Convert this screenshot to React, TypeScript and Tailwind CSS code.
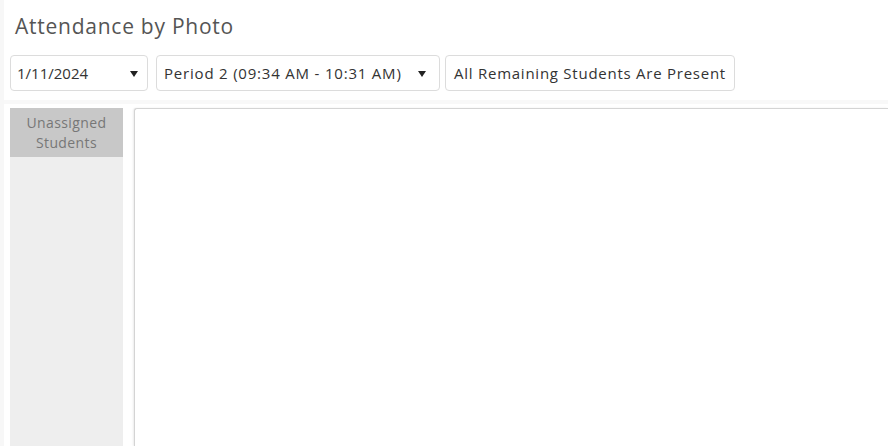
import React from "react";

const Caret = () => (
  <svg width="8" height="6" viewBox="0 0 8 6" className="shrink-0 mt-[2px]">
    <path d="M0 0 L8 0 L4 6 Z" fill="#222" />
  </svg>
);

export default function App() {
  return (
    <div
      className="w-[888px] h-[446px] overflow-hidden bg-white flex"
      style={{ fontFamily: "'Open Sans', 'Noto Sans', sans-serif" }}
    >
      <div className="w-[4px] shrink-0 bg-[#f7f7f7]" />
      <div className="flex-1 flex flex-col">
        <div className="h-[100px] flex flex-col pl-[6px]">
          <h1 className="text-[21px] text-[#555] pl-[5px] pt-[12px] leading-[28px] tracking-[0.75px]">
            Attendance by Photo
          </h1>
          <div className="flex items-center mt-[15px]">
            <div className="w-[138px] h-[36px] border border-[#dcdcdc] rounded-[4px] flex items-center justify-between pl-[6px] pr-[9px] text-[15px] text-[#333]">
              <span>1/11/2024</span>
              <Caret />
            </div>
            <div className="ml-[8px] w-[284px] h-[36px] border border-[#dcdcdc] rounded-[4px] flex items-center justify-between pl-[7px] pr-[13px] text-[15px] text-[#333]">
              <span className="tracking-[0.8px]">Period 2 (09:34 AM - 10:31 AM)</span>
              <Caret />
            </div>
            <div className="ml-[5px] w-[290px] h-[36px] border border-[#dcdcdc] rounded-[4px] flex items-center pl-[8px] text-[15px] text-[#333] tracking-[0.75px]">
              All Remaining Students Are Present
            </div>
          </div>
        </div>
        <div className="h-[4px] bg-[#f8f8f8]" />
        <div className="flex-1 flex pt-[4px] pl-[6px]">
          <div className="w-[113px] flex flex-col bg-[#eeeeee]">
            <div className="h-[49px] bg-[#c8c8c8] text-[#777] text-[14px] leading-[20px] tracking-[0.4px] flex flex-col items-center justify-center">
              <span>Unassigned</span>
              <span>Students</span>
            </div>
          </div>
          <div className="ml-[11px] flex-1 border-t border-l border-[#d4d4d4] rounded-tl-[3px] shadow-[-1px_0_2px_rgba(0,0,0,0.08)] bg-white" />
        </div>
      </div>
    </div>
  );
}
